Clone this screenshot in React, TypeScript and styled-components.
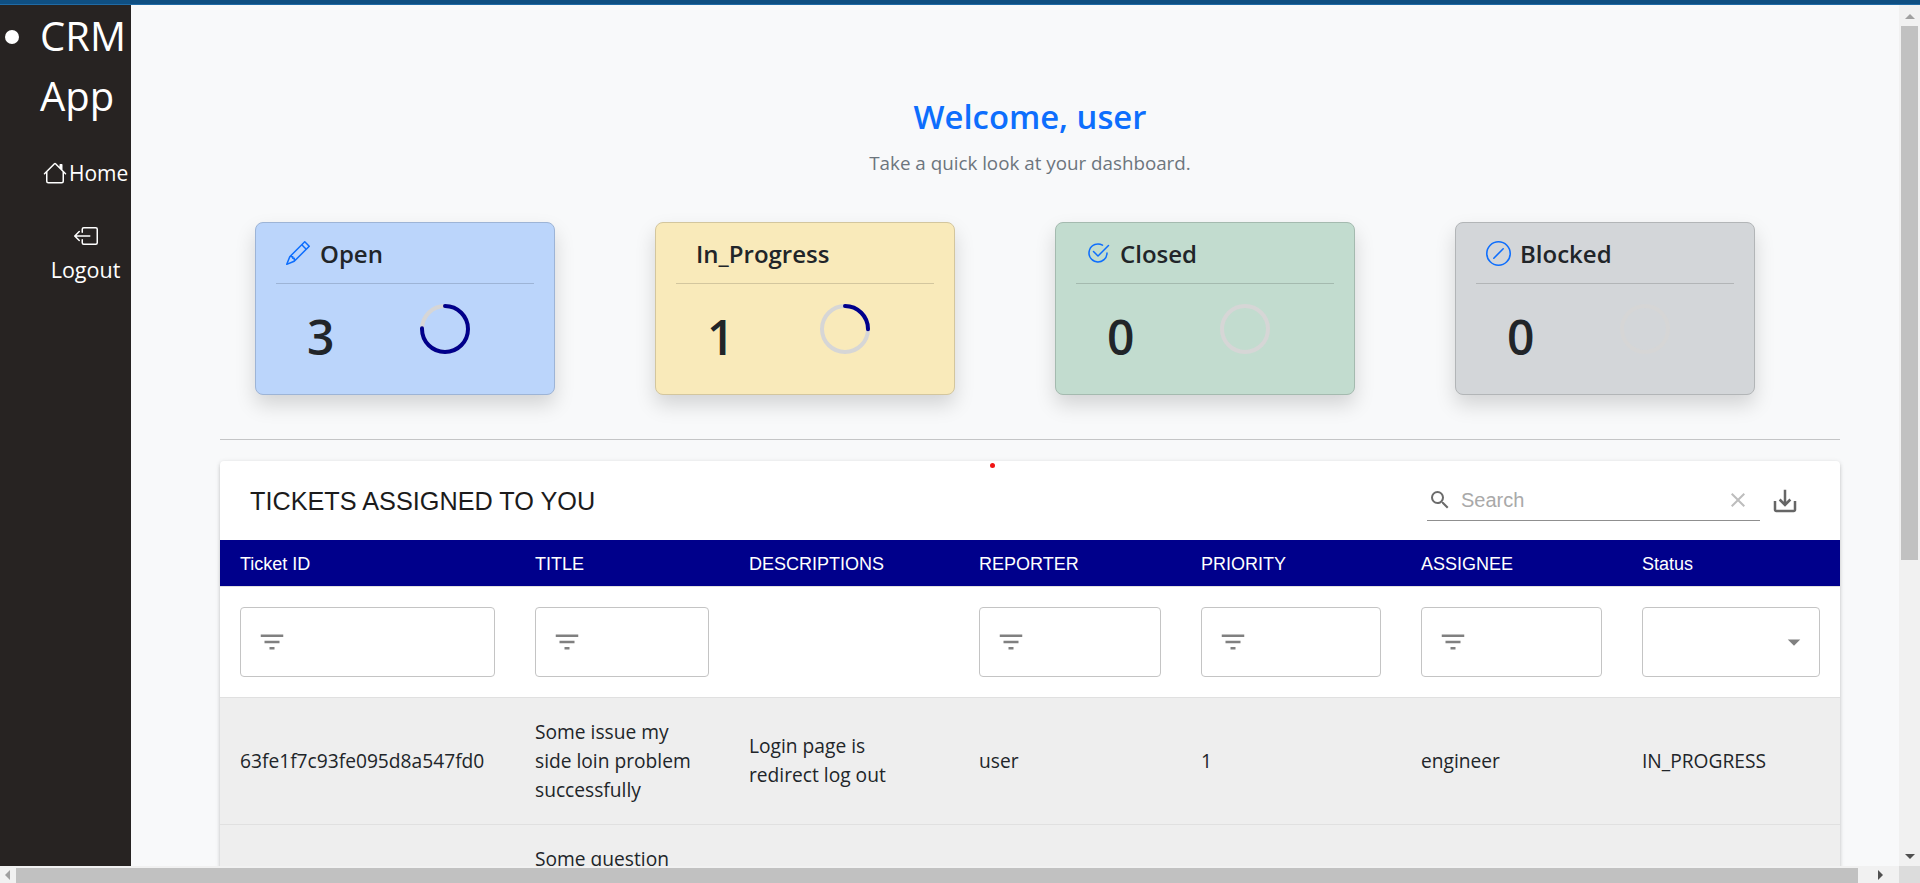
import { createGlobalStyle, styled } from "styled-components";
import { BsBoxArrowLeft, BsCheck2Circle, BsHouse, BsPencil, BsSlashCircle } from "react-icons/bs";
import { MdArrowDropDown, MdClear, MdFilterList, MdSaveAlt, MdSearch } from "react-icons/md";

const GlobalStyle = createGlobalStyle`
    * {
        box-sizing: border-box;
    }
    html, body {
        margin: 0;
        height: 100%;
        overflow: hidden;
    }
    body {
        font-family: "Open Sans", "Noto Sans", sans-serif;
        color: #212529;
        background: #f8f9fa;
    }
`;

const Page = styled.div`
    display: flex;
    flex-direction: column;
    width: 1920px;
    height: 883px;
    overflow: hidden;
`;

const TopStrip = styled.div`
    height: 5px;
    flex: none;
    background: #0f4f82;
    border-bottom: 1px solid #1f6aa5;
`;

const Middle = styled.div`
    display: flex;
    flex: 1;
    min-height: 0;
`;

const Viewport = styled.div`
    display: flex;
    flex: 1;
    min-width: 0;
    overflow: hidden;
    background: #f8f9fa;
`;

const Sidebar = styled.nav`
    width: 131px;
    flex: none;
    background: #272322;
    color: #fff;
    text-align: center;
`;

const Brand = styled.ul`
    margin: 0;
    padding: 1px 0 0 40px;
    font-size: 40px;
    line-height: 60px;
    text-align: left;
`;

const HomeLink = styled.div`
    display: flex;
    align-items: center;
    gap: 2px;
    margin-top: 32px;
    padding-left: 43px;
    font-size: 21px;
    line-height: 30px;
`;

const LogoutLink = styled.div`
    display: flex;
    flex-direction: column;
    align-items: center;
    gap: 7px;
    margin-top: 36px;
    padding-left: 40px;
    font-size: 21.5px;
    line-height: 30px;
`;

const Content = styled.main`
    flex: 1;
    min-width: 0;
    padding: 0 59px 0 89px;
`;

const Welcome = styled.header`
    text-align: center;
    padding-top: 91px;
`;

const Heading = styled.h2`
    margin: 0;
    font-size: 32.8px;
    line-height: 42px;
    font-weight: 600;
    color: #0d6efd;
`;

const Subheading = styled.p`
    margin: 12px 0 0;
    font-size: 18.8px;
    line-height: 27px;
    color: #6c757d;
`;

const CardRow = styled.div`
    display: flex;
    gap: 100px;
    margin: 45px 0 0 35px;
`;

const Card = styled.section<{ $bg: string; $edge: string }>`
    width: 300px;
    height: 173px;
    padding: 0 20px;
    border: 1px solid ${(p) => p.$edge};
    border-radius: 8px;
    background: ${(p) => p.$bg};
    box-shadow: 0 10px 20px rgba(0, 0, 0, 0.15);
`;

const CardTitle = styled.h5<{ $edge: string }>`
    display: flex;
    align-items: center;
    gap: 9px;
    height: 61px;
    margin: 0;
    padding-left: 10px;
    font-size: 24px;
    font-weight: 600;
    border-bottom: 1px solid ${(p) => p.$edge};
`;

const IconSlot = styled.span<{ $empty: boolean }>`
    display: flex;
    width: ${(p) => (p.$empty ? "1px" : "25px")};
    flex: none;
    color: #0d6efd;
`;

const CardBody = styled.div`
    display: flex;
`;

const Count = styled.div`
    width: 144px;
    padding: 19px 0 0 31px;
    font-size: 48px;
    line-height: 68px;
    font-weight: 600;
`;

const Ring = styled.svg`
    display: block;
    width: 50px;
    height: 50px;
    margin-top: 20px;
`;

const Divider = styled.hr`
    height: 1px;
    margin: 44px 0 0;
    border: 0;
    background: #c4c5c6;
`;

const TableCard = styled.section`
    margin-top: 21px;
    position: relative;
    border-radius: 4px 4px 0 0;
    background: #fff;
    box-shadow: 0 2px 4px -1px rgba(0, 0, 0, 0.2), 0 1px 5px rgba(0, 0, 0, 0.12);
`;

const RedDot = styled.span`
    position: absolute;
    top: 2px;
    left: 770px;
    width: 5px;
    height: 5px;
    border-radius: 50%;
    background: #f01414;
`;

const Toolbar = styled.div`
    display: flex;
    align-items: center;
    height: 79px;
    padding: 0 40px 0 30px;
`;

const TableTitle = styled.h6`
    flex: 1;
    margin: 2px 0 0;
    font-family: "Liberation Sans", Arial, sans-serif;
    font-size: 25.25px;
    font-weight: 400;
    color: #1b1b1b;
`;

const SearchBox = styled.div`
    display: flex;
    align-items: center;
    width: 333px;
    height: 40px;
    padding: 0 10px 0 1px;
    border-bottom: 1px solid #8f8f8f;
    color: #6b6b6b;
`;

const SearchHint = styled.span`
    flex: 1;
    margin-left: 9px;
    font-family: "Liberation Sans", Arial, sans-serif;
    font-size: 20px;
    color: #a9a9a9;
`;

const ExportButton = styled.span`
    display: flex;
    margin-left: 10px;
    color: #666;
`;

const Grid = styled.div`
    display: grid;
    grid-template-columns: 295px 214px 230px 222px 220px 221px 218px;
`;

const HeadRow = styled(Grid)`
    height: 47px;
    padding-top: 2px;
    align-items: center;
    background: #00008b;
    border-bottom: 1px solid #e0e0e0;
    font-family: "Liberation Sans", Arial, sans-serif;
    font-size: 18px;
    color: #fff;
`;

const HeadCell = styled.div`
    padding-left: 20px;
`;

const FilterRow = styled(Grid)`
    height: 111px;
    padding-top: 20px;
    border-bottom: 1px solid #e0e0e0;
`;

const FilterCell = styled.div`
    padding: 0 20px;
`;

const FilterInput = styled.div`
    display: flex;
    align-items: center;
    justify-content: space-between;
    height: 70px;
    padding: 0 10px 0 16px;
    border: 1px solid #c4c4c4;
    border-radius: 4px;
    color: #808080;
`;

const TicketRow = styled(Grid)<{ $top?: boolean }>`
    min-height: 127px;
    align-items: ${(p) => (p.$top ? "start" : "center")};
    border-bottom: 1px solid #e0e0e0;
    background: #eeeeee;
    font-size: 19.2px;
    line-height: 28.8px;
    color: #212529;
`;

const Cell = styled.div`
    padding: 20px 20px;
`;

const ScrollY = styled.div`
    display: flex;
    flex-direction: column;
    align-items: center;
    justify-content: space-between;
    width: 21px;
    flex: none;
    background: #f1f1f1;
`;

const ThumbY = styled.div`
    width: 17px;
    height: 534px;
    background: #c1c1c1;
`;

const ScrollTopGroup = styled.div`
    display: flex;
    flex-direction: column;
    align-items: center;
`;

const ArrowUp = styled.span`
    width: 0;
    height: 0;
    margin: 9px 0 7px;
    border: 5px solid transparent;
    border-top: 0;
    border-bottom-color: #a0a0a0;
`;

const ArrowDown = styled.span`
    width: 0;
    height: 0;
    margin-bottom: 7px;
    border: 5px solid transparent;
    border-bottom: 0;
    border-top-color: #505050;
`;

const ScrollX = styled.div`
    display: flex;
    align-items: center;
    height: 17px;
    flex: none;
    background: #f1f1f1;
`;

const ArrowLeft = styled.span`
    width: 0;
    height: 0;
    margin: 0 6px 0 5px;
    border: 5px solid transparent;
    border-left: 0;
    border-right-color: #a0a0a0;
`;

const ThumbX = styled.div`
    width: 1842px;
    height: 15px;
    margin-top: 2px;
    background: #c1c1c1;
`;

const ArrowRight = styled.span`
    width: 0;
    height: 0;
    margin-left: 20px;
    border: 5px solid transparent;
    border-right: 0;
    border-left-color: #505050;
`;

const Corner = styled.div`
    width: 21px;
    height: 17px;
    margin-left: auto;
    background: #dcdcdc;
`;

function ProgressRing({ percent, trail }: { percent: number; trail: string }) {
    // same geometry as a circular progress bar: r=23, starting from the top
    const length = 2 * Math.PI * 23;
    return (
        <Ring viewBox="0 0 50 50">
            <circle cx="25" cy="25" r="23" fill="none" stroke={trail} strokeWidth="4" />
            {percent > 0 && (
                <circle
                    cx="25"
                    cy="25"
                    r="23"
                    fill="none"
                    stroke="#00008b"
                    strokeWidth="4"
                    strokeLinecap="round"
                    strokeDasharray={`${(length * percent) / 100} ${length}`}
                    transform="rotate(-90 25 25)"
                />
            )}
        </Ring>
    );
}

const CARDS = [
    { title: "Open", count: 3, percent: 75, bg: "#bbd5fb", edge: "#9db4d6", trail: "#d6d6d6", icon: <BsPencil size={24} /> },
    { title: "In_Progress", count: 1, percent: 25, bg: "#f9eaba", edge: "#d3c69e", trail: "#d6d6d6", icon: null },
    { title: "Closed", count: 0, percent: 0, bg: "#c2dccf", edge: "#a4baaf", trail: "#d6d6d6", icon: <BsCheck2Circle size={24} /> },
    { title: "Blocked", count: 0, percent: 0, bg: "#d3d6d9", edge: "#b2b5b7", trail: "#d6d6d6", icon: <BsSlashCircle size={25} /> },
];

const COLUMNS = ["Ticket ID", "TITLE", "DESCRIPTIONS", "REPORTER", "PRIORITY", "ASSIGNEE", "Status"];

function App() {
    return (
        <Page>
            <GlobalStyle />
            <TopStrip />
            <Middle>
                <Viewport>
                    <Sidebar>
                        <Brand>
                            <li>CRM App</li>
                        </Brand>
                        <HomeLink>
                            <BsHouse size={24} />
                            <span>Home</span>
                        </HomeLink>
                        <LogoutLink>
                            <BsBoxArrowLeft size={24} />
                            <span>Logout</span>
                        </LogoutLink>
                    </Sidebar>
                    <Content>
                        <Welcome>
                            <Heading>Welcome, user</Heading>
                            <Subheading>Take a quick look at your dashboard.</Subheading>
                        </Welcome>
                        <CardRow>
                            {CARDS.map((card) => (
                                <Card key={card.title} $bg={card.bg} $edge={card.edge}>
                                    <CardTitle $edge={card.edge}>
                                        <IconSlot $empty={!card.icon}>{card.icon}</IconSlot>
                                        {card.title}
                                    </CardTitle>
                                    <CardBody>
                                        <Count>{card.count}</Count>
                                        <ProgressRing percent={card.percent} trail={card.trail} />
                                    </CardBody>
                                </Card>
                            ))}
                        </CardRow>
                        <Divider />
                        <TableCard>
                            <RedDot />
                            <Toolbar>
                                <TableTitle>TICKETS ASSIGNED TO YOU</TableTitle>
                                <SearchBox>
                                    <MdSearch size={24} />
                                    <SearchHint>Search</SearchHint>
                                    <MdClear size={24} color="#bdbdbd" />
                                </SearchBox>
                                <ExportButton>
                                    <MdSaveAlt size={30} />
                                </ExportButton>
                            </Toolbar>
                            <HeadRow>
                                {COLUMNS.map((name) => (
                                    <HeadCell key={name}>{name}</HeadCell>
                                ))}
                            </HeadRow>
                            <FilterRow>
                                {COLUMNS.map((name) => (
                                    <FilterCell key={name}>
                                        {name === "DESCRIPTIONS" ? null : name === "Status" ? (
                                            <FilterInput>
                                                <span />
                                                <MdArrowDropDown size={30} />
                                            </FilterInput>
                                        ) : (
                                            <FilterInput>
                                                <MdFilterList size={30} />
                                            </FilterInput>
                                        )}
                                    </FilterCell>
                                ))}
                            </FilterRow>
                            <TicketRow>
                                <Cell>63fe1f7c93fe095d8a547fd0</Cell>
                                <Cell>Some issue my side loin problem successfully</Cell>
                                <Cell>Login page is redirect log out</Cell>
                                <Cell>user</Cell>
                                <Cell>1</Cell>
                                <Cell>engineer</Cell>
                                <Cell>IN_PROGRESS</Cell>
                            </TicketRow>
                            <TicketRow $top>
                                <Cell />
                                <Cell>Some question</Cell>
                            </TicketRow>
                        </TableCard>
                    </Content>
                </Viewport>
                <ScrollY>
                    <ScrollTopGroup>
                        <ArrowUp />
                        <ThumbY />
                    </ScrollTopGroup>
                    <ArrowDown />
                </ScrollY>
            </Middle>
            <ScrollX>
                <ArrowLeft />
                <ThumbX />
                <ArrowRight />
                <Corner />
            </ScrollX>
        </Page>
    );
}

export default App;
